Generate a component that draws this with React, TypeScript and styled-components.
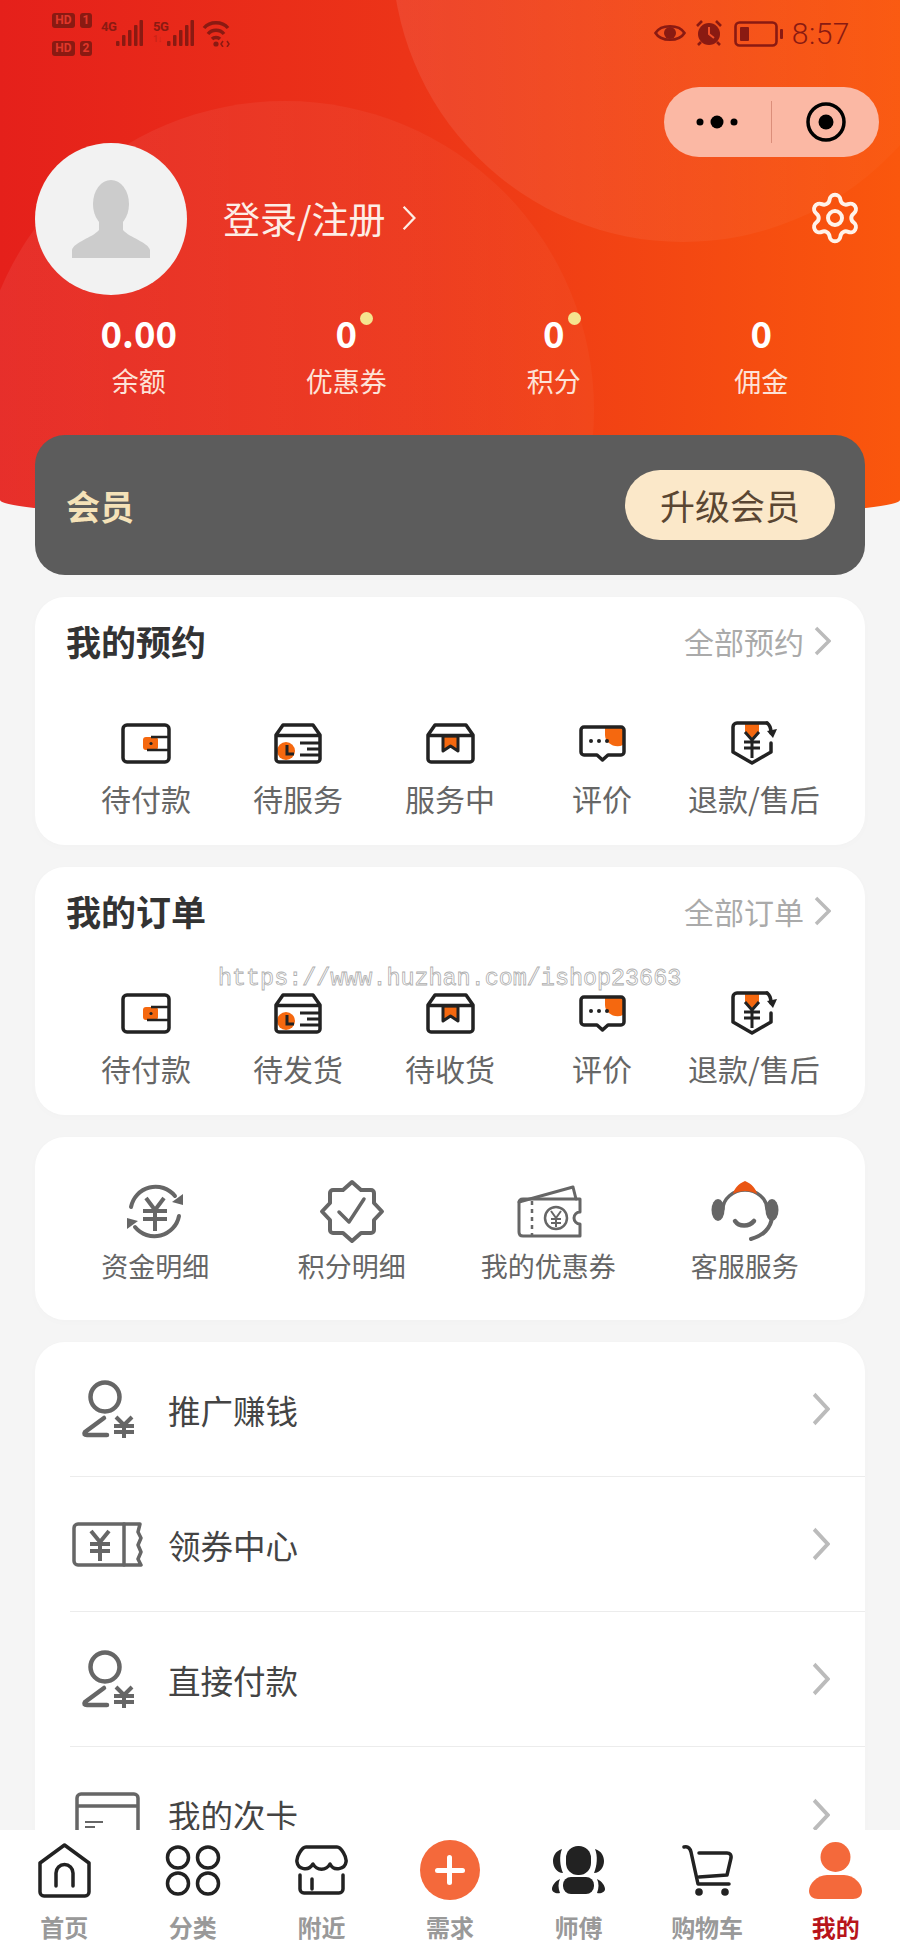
import React from "react";
import styled, { createGlobalStyle } from "styled-components";
import { Settings } from "lucide-react";

const INK = "#222222";
const ORANGE = "#f5680f";
const GREY = "#666666";
const STATUS = "#8a1a12";
const TAB_ORANGE = "#f4693b";

const GlobalStyle = createGlobalStyle`
  html, body {
    margin: 0;
    padding: 0;
    background: #f5f5f5;
  }
  * {
    box-sizing: border-box;
  }
`;

const Page = styled.div`
  position: relative;
  width: 900px;
  height: 1950px;
  overflow: hidden;
  display: flex;
  flex-direction: column;
  background: #f5f5f5;
  font-family: "Noto Sans CJK SC", "Noto Sans", sans-serif;
`;

const Scroll = styled.div`
  flex: 1;
  min-height: 0;
  overflow: hidden;
`;

const Hero = styled.header`
  position: relative;
  height: 521px;
  overflow: hidden;
  background: linear-gradient(90deg, #e5201b 0%, #ec3418 45%, #fa570d 100%);
  border-radius: 0 0 450px 450px / 0 0 21px 21px;
`;

const Bubble = styled.div<{ $x: number; $y: number; $r: number; $from: number; $to: number }>`
  position: absolute;
  left: ${(p) => p.$x - p.$r}px;
  top: ${(p) => p.$y - p.$r}px;
  width: ${(p) => p.$r * 2}px;
  height: ${(p) => p.$r * 2}px;
  border-radius: 50%;
  background: linear-gradient(
    90deg,
    rgba(255, 255, 255, ${(p) => p.$from}),
    rgba(255, 255, 255, ${(p) => p.$to})
  );
`;

const HeroBody = styled.div`
  position: relative;
`;

const StatusBar = styled.div`
  height: 70px;
  padding: 13px 50px 0 52px;
  display: flex;
  justify-content: space-between;
  align-items: flex-start;
  color: ${STATUS};
`;

const StatusGroup = styled.div`
  display: flex;
  align-items: flex-start;
`;

const SimColumn = styled.div`
  display: flex;
  flex-direction: column;
  gap: 13px;
  margin-right: 9px;
`;

const SimRow = styled.div`
  display: flex;
  gap: 5px;
`;

const SimChip = styled.span<{ $wide?: boolean }>`
  width: ${(p) => (p.$wide ? 23 : 12)}px;
  height: 15px;
  border-radius: 3px;
  background: ${STATUS};
  color: #e2372a;
  font: 700 12px/15px "Roboto", sans-serif;
  text-align: center;
`;

const NetStack = styled.div<{ $gap?: number; $width: number }>`
  display: flex;
  flex-direction: column;
  margin: 7px 0 0 ${(p) => p.$gap ?? 0}px;
  width: ${(p) => p.$width}px;
  font: 700 13px/13px "Roboto", sans-serif;
  letter-spacing: -0.5px;
`;

const NetFaint = styled.span`
  margin-top: 1px;
  font-size: 9px;
  line-height: 10px;
  opacity: 0.3;
`;

const BarsSlot = styled.div`
  margin-top: 7px;
`;

const Clock = styled.span`
  margin-left: 9px;
  margin-top: 4px;
  font: 300 30px/34px "Roboto", sans-serif;
  letter-spacing: 0.5px;
`;

const StatusIcon = styled.svg<{ $left?: number; $top?: number }>`
  display: block;
  margin-left: ${(p) => p.$left ?? 0}px;
  margin-top: ${(p) => p.$top ?? 0}px;
`;

const Capsule = styled.div`
  position: absolute;
  top: 87px;
  right: 21px;
  width: 215px;
  height: 70px;
  border-radius: 35px;
  background: #fbb8a4;
  display: flex;
  align-items: center;
`;

const CapsuleSide = styled.div`
  flex: 1;
  height: 100%;
  display: flex;
  align-items: center;
  justify-content: center;
`;

const CapsuleDivider = styled.div`
  width: 1px;
  height: 42px;
  background: rgba(180, 90, 70, 0.45);
`;

const Profile = styled.div`
  padding: 73px 37px 0 35px;
  display: flex;
  align-items: center;
`;

const Avatar = styled.div`
  width: 152px;
  height: 152px;
  border-radius: 50%;
  background: #f2f2f2;
  display: flex;
  align-items: center;
  justify-content: center;
`;

const LoginLink = styled.div`
  margin-left: 36px;
  margin-top: -2px;
  display: flex;
  align-items: center;
  gap: 16px;
  color: #fdeee6;
  font-size: 37px;
  line-height: 50px;
`;

const GearSlot = styled.div`
  margin-left: auto;
  margin-top: -3px;
  display: flex;
  color: #fff3ea;
`;

const Stats = styled.div`
  margin-top: 18px;
  padding: 0 35px;
  display: grid;
  grid-template-columns: repeat(4, 1fr);
`;

const Stat = styled.div`
  display: flex;
  flex-direction: column;
  align-items: center;
`;

const StatValue = styled.span`
  position: relative;
  color: #fff;
  font-size: 36.500px;
  line-height: 40px;
  font-weight: 700;
`;

const StatDot = styled.i`
  position: absolute;
  top: -1px;
  right: -16px;
  width: 13px;
  height: 13px;
  border-radius: 50%;
  background: #f5e58f;
`;

const StatLabel = styled.span`
  margin-top: 10px;
  color: #fde3d8;
  font-size: 27px;
  line-height: 36px;
`;

const Content = styled.main`
  position: relative;
  margin-top: -86px;
  padding: 0 35px;
  display: flex;
  flex-direction: column;
  gap: 22px;
`;

const MemberCard = styled.section`
  height: 140px;
  padding: 0 30px 0 31px;
  border-radius: 30px;
  background: #5c5c5c;
  display: flex;
  align-items: center;
  justify-content: space-between;
`;

const MemberTitle = styled.span`
  color: #f5e2b8;
  font-size: 34px;
  font-weight: 700;
`;

const UpgradeButton = styled.span`
  width: 210px;
  height: 70px;
  border-radius: 35px;
  background: #fbe8c9;
  color: #5a4632;
  font-size: 35px;
  line-height: 70px;
  text-align: center;
`;

const Card = styled.section`
  background: #fff;
  border-radius: 30px;
  box-shadow: 0 2px 10px rgba(0, 0, 0, 0.015);
`;

const OrderCard = styled(Card)`
  height: 248px;
`;

const CardHeader = styled.div`
  height: 92px;
  padding: 0 34px 5px 31px;
  display: flex;
  align-items: center;
  justify-content: space-between;
`;

const CardTitle = styled.h2`
  margin: 0;
  color: #333;
  font-size: 35px;
  font-weight: 700;
`;

const CardMore = styled.span`
  display: flex;
  align-items: center;
  gap: 10px;
  color: #aaa;
  font-size: 30px;
`;

const OrderGrid = styled.div`
  margin-top: 32px;
  padding: 0 35px;
  display: grid;
  grid-template-columns: repeat(5, 1fr);
`;

const GridCell = styled.div`
  display: flex;
  flex-direction: column;
  align-items: center;
`;

const OrderIconBox = styled.div`
  height: 44px;
  display: flex;
  align-items: center;
  justify-content: center;
`;

const OrderLabel = styled.span`
  margin-top: 13px;
  color: ${GREY};
  font-size: 30px;
  line-height: 40px;
  white-space: nowrap;
`;

const ToolCard = styled(Card)`
  height: 183px;
  padding: 41px 22px 0;
  display: grid;
  grid-template-columns: repeat(4, 1fr);
  align-items: start;
`;

const ToolIconBox = styled.div`
  height: 66px;
  display: flex;
  align-items: center;
  justify-content: center;
`;

const ToolLabel = styled.span`
  margin-top: 3px;
  color: ${GREY};
  font-size: 27px;
  line-height: 38px;
  white-space: nowrap;
`;

const ListCard = styled(Card)`
  padding-left: 35px;
  padding-bottom: 40px;
`;

const ListRow = styled.div<{ $last?: boolean }>`
  height: 135px;
  display: flex;
  align-items: center;
  padding-right: 35px;
  border-bottom: ${(p) => (p.$last ? "none" : "1px solid #ececec")};
`;

const ListIconBox = styled.div`
  width: 98px;
  display: flex;
  justify-content: center;
  padding-right: 24px;
`;

const ListText = styled.span`
  flex: 1;
  color: #444;
  font-size: 32.500px;
`;

const TabBar = styled.nav`
  flex: none;
  height: 120px;
  padding-top: 10px;
  background: #fff;
  display: grid;
  grid-template-columns: repeat(7, 1fr);
`;

const Tab = styled.div`
  display: flex;
  flex-direction: column;
  align-items: center;
`;

const TabIconBox = styled.div`
  height: 60px;
  display: flex;
  align-items: center;
  justify-content: center;
`;

const TabLabel = styled.span<{ $active?: boolean }>`
  margin-top: 12px;
  color: ${(p) => (p.$active ? "#b8151b" : "#999")};
  font-size: 24px;
  line-height: 30px;
  font-weight: 700;
`;

const PlusButton = styled.div`
  position: relative;
  width: 60px;
  height: 60px;
  border-radius: 50%;
  background: ${TAB_ORANGE};

  &::before,
  &::after {
    content: "";
    position: absolute;
    background: #fff;
    border-radius: 3px;
  }
  &::before {
    left: 15px;
    right: 15px;
    top: 27.5px;
    height: 5px;
  }
  &::after {
    top: 15px;
    bottom: 15px;
    left: 27.5px;
    width: 5px;
  }
`;

const Watermark = styled.div`
  position: absolute;
  left: 218px;
  top: 964px;
  color: #fff;
  font: 400 23.4px/30px "Liberation Mono", monospace;
  -webkit-text-stroke: 0.8px #aeaeae;
  white-space: nowrap;
`;

const Chevron = ({ w = 17, h = 30, color = "#bbb", sw = 3 }: { w?: number; h?: number; color?: string; sw?: number }) => (
  <svg width={w} height={h} viewBox="0 0 17 30" fill="none" preserveAspectRatio="none">
    <path d="M2 2 L15 15 L2 28" stroke={color} strokeWidth={sw} />
  </svg>
);

const BarsIcon = () => (
  <svg width="27" height="26" viewBox="0 0 27 26" fill="currentColor">
    <rect x="0" y="21" width="3.500" height="5" rx="1" />
    <rect x="6" y="15" width="3.500" height="11" rx="1" />
    <rect x="12" y="10" width="3.500" height="16" rx="1" />
    <rect x="18" y="5" width="3.500" height="21" rx="1" />
    <rect x="23.500" y="0" width="3.500" height="26" rx="1" />
  </svg>
);

const lineProps = { fill: "none", stroke: INK, strokeWidth: 3.5, strokeLinejoin: "round" as const, strokeLinecap: "round" as const };
const greyProps = { ...lineProps, stroke: GREY };

const WalletIcon = () => (
  <svg width="50" height="41" viewBox="0 0 50 41">
    <rect x="2" y="2" width="46" height="37" rx="4" {...lineProps} fill="#fff" />
    <rect x="22" y="14" width="15" height="13" rx="3" fill={ORANGE} />
    <path d="M30 14 H47 M26 27 H47" stroke={INK} strokeWidth="2.5" />
    <circle cx="30" cy="20.5" r="1.6" fill={INK} />
  </svg>
);

const BoxClockIcon = () => (
  <svg width="48" height="41" viewBox="0 0 48 41">
    <circle cx="12" cy="28" r="9" fill={ORANGE} />
    <path d="M9 2 H39 L46 12 V36 a3 3 0 0 1 -3 3 H5 a3 3 0 0 1 -3 -3 V12 Z M2 12.5 H46" {...lineProps} />
    <path d="M13 22 V31 H20" stroke={INK} strokeWidth="3" fill="none" />
    <path d="M26 20 H46 M33 26 H46 M26 32 H46" stroke={INK} strokeWidth="3" fill="none" />
  </svg>
);

const BoxRibbonIcon = () => (
  <svg width="49" height="41" viewBox="0 0 49 41">
    <path d="M17 13 V28 L24.5 23 L32 28 V13 Z" fill={ORANGE} stroke={INK} strokeWidth="3" strokeLinejoin="round" />
    <path d="M9 2 H40 L47 12 V36 a3 3 0 0 1 -3 3 H5 a3 3 0 0 1 -3 -3 V12 Z M2 12.5 H47" {...lineProps} />
  </svg>
);

const ChatIcon = () => (
  <svg width="47" height="37" viewBox="0 0 47 37">
    <path d="M26 2 H44 V20 C36 24 26 18 26 10 Z" fill={ORANGE} />
    <path d="M5 2 H42 a3 3 0 0 1 3 3 V27 a3 3 0 0 1 -3 3 H29 L23.5 35 L18 30 H5 a3 3 0 0 1 -3 -3 V5 a3 3 0 0 1 3 -3 Z" {...lineProps} />
    <circle cx="12" cy="16" r="2" fill={INK} />
    <circle cx="20" cy="16" r="2" fill={INK} />
    <circle cx="28" cy="16" r="2" fill={INK} />
  </svg>
);

const RefundIcon = () => (
  <svg width="47" height="44" viewBox="0 0 47 44">
    <path d="M14 2 H28 V10 C28 14 24 17 21 17 C18 17 14 14 14 10 Z" fill={ORANGE} />
    <path d="M36 2 H6 a4 4 0 0 0 -4 4 V31 L21 42 L40 31 V22" {...lineProps} />
    <path d="M36 2 C39 4 40 7 40 12" {...lineProps} />
    <path d="M36 10 L46 8 L42 17 Z" fill={INK} />
    <path d="M14 11 L21 19 L28 11 M13 21 H29 M13 27 H29 M21 19 V37" stroke={INK} strokeWidth="3" fill="none" />
  </svg>
);

const CoinIcon = () => (
  <svg width="60" height="57" viewBox="0 0 60 57">
    <path d="M6 24 A25 25 0 0 1 50 13" {...greyProps} strokeWidth="4" />
    <path d="M54 33 A25 25 0 0 1 10 44" {...greyProps} strokeWidth="4" />
    <path d="M47 19 L58 22 L58 11 Z M13 38 L2 35 L2 46 Z" fill={GREY} />
    <path d="M21 15 L30 27 L39 15 M18 28 H42 M18 36 H42 M30 27 V48" {...greyProps} strokeWidth="4" strokeLinecap="butt" />
  </svg>
);

const BadgeIcon = () => (
  <svg width="66" height="65" viewBox="0 0 66 65">
    <path
      d="M33 3 L42 11 H52 a3 3 0 0 1 3 3 V24 L63 32.5 L55 41 V51 a3 3 0 0 1 -3 3 H42 L33 62 L24 54 H14 a3 3 0 0 1 -3 -3 V41 L3 32.5 L11 24 V14 a3 3 0 0 1 3 -3 H24 Z"
      {...greyProps}
      strokeWidth="4"
    />
    <path d="M20 33 L30 43 L45 20" {...greyProps} strokeWidth="3.5" />
  </svg>
);

const CouponIcon = () => (
  <svg width="68" height="53" viewBox="0 0 68 53">
    <path d="M5 17 L59 2 L62 14" {...greyProps} strokeWidth="3" />
    <path d="M9 14 H66 V27 a6 6 0 0 0 0 12 V51 H9 C6 51 5 49 5 47 V18 C5 16 6 14 9 14 Z" {...greyProps} strokeWidth="3" />
    <path d="M18 16 V50" {...greyProps} strokeWidth="2.5" strokeDasharray="4 4" strokeLinecap="butt" />
    <circle cx="42" cy="33" r="11" {...greyProps} strokeWidth="2.5" />
    <path d="M37 26 L42 33 L47 26 M37 34 H47 M37 38 H47 M42 33 V42" {...greyProps} strokeWidth="2" strokeLinecap="butt" />
  </svg>
);

const HeadsetIcon = () => (
  <svg width="68" height="60" viewBox="0 0 68 60">
    <path d="M12 28 C12 18 22 9 34 9 C46 9 56 18 56 28" {...greyProps} strokeWidth="3.500" />
    <path d="M34 0 C27 3 23 8 22 13 C29 9 39 9 46 13 C45 8 41 3 34 0 Z" fill="#ea5614" />
    <ellipse cx="7" cy="29" rx="6.500" ry="11" fill={GREY} />
    <ellipse cx="61" cy="29" rx="6.500" ry="11" fill={GREY} />
    <path d="M61 36 C60 47 52 55 40 58" {...greyProps} strokeWidth="4" />
    <path d="M24 40 C28 46 38 46 43 40" {...greyProps} strokeWidth="4.500" />
  </svg>
);

const PersonCoinIcon = () => (
  <svg width="53" height="58" viewBox="0 0 53 58">
    <circle cx="24" cy="17" r="14.5" {...greyProps} strokeWidth="4.5" />
    <path d="M23 38 L4 52 Q2 55 6 55 H26" {...greyProps} strokeWidth="4.5" />
    <path d="M35 37 L43 45 L51 37 M33 46 H53 M33 52 H53 M43 45 V58" {...greyProps} strokeWidth="4" strokeLinecap="butt" />
  </svg>
);

const TicketIcon = () => (
  <svg width="71" height="45" viewBox="0 0 71 45">
    <path d="M6 2 H68 L66 10 L69 16 L66 23 L69 30 L66 37 L69 43 H6 a4 4 0 0 1 -4 -4 V6 a4 4 0 0 1 4 -4 Z" {...greyProps} strokeWidth="3.5" />
    <path d="M52 2 V43" {...greyProps} strokeWidth="3.5" />
    <path d="M19 9 L28 20 L37 9 M18 22 H38 M18 29 H38 M28 20 V39" {...greyProps} strokeWidth="4" strokeLinecap="butt" />
  </svg>
);

const CountCardIcon = () => (
  <svg width="65" height="46" viewBox="0 0 65 46">
    <path d="M2 46 V6 a4 4 0 0 1 4 -4 H59 a4 4 0 0 1 4 4 V46 M2 14 H63" {...greyProps} strokeWidth="3.5" />
    <path d="M10 30 H28 M10 35 H20" stroke={GREY} strokeWidth="2" />
  </svg>
);

const HomeIcon = () => (
  <svg width="55" height="56" viewBox="0 0 55 56">
    <path d="M27.5 3 L52 21 V50 a4 4 0 0 1 -4 4 H7 a4 4 0 0 1 -4 -4 V21 Z" {...lineProps} />
    <path d="M19 44 V31 a8.5 8.5 0 0 1 17 0 V44" {...lineProps} />
  </svg>
);

const GridIcon = () => (
  <svg width="56" height="51" viewBox="0 0 56 51">
    <circle cx="13" cy="12.5" r="10.5" {...lineProps} />
    <circle cx="43" cy="12.5" r="10.5" {...lineProps} />
    <circle cx="13" cy="38.5" r="10.5" {...lineProps} />
    <circle cx="43" cy="38.5" r="10.5" {...lineProps} />
  </svg>
);

const ShopIcon = () => (
  <svg width="53" height="50" viewBox="0 0 53 50">
    <path d="M11 2 H42 C46 2 52 12 51 17 C50 24 39 27 35 19 C31 26 22 26 18 19 C13 27 3 24 2 17 C1 12 7 2 11 2 Z" {...lineProps} />
    <path d="M5 30 V44 a4 4 0 0 0 4 4 H44 a4 4 0 0 0 4 -4 V30 M17 34 V44" {...lineProps} />
  </svg>
);

const PeopleIcon = () => (
  <svg width="53" height="48" viewBox="0 0 53 48" fill={INK}>
    <rect x="14" y="0" width="25" height="29" rx="12" />
    <path d="M10 3 C3 5 1 11 1 15 C1 21 5 27 11 27 C8 20 7 10 10 3 Z" />
    <path d="M43 3 C50 5 52 11 52 15 C52 21 48 27 42 27 C45 20 46 10 43 3 Z" />
    <rect x="11" y="31" width="31" height="17" rx="8" />
    <path d="M8 33 C3 35 0 40 0 43 C0 46 4 48 8 47 C6 42 6 37 8 33 Z" />
    <path d="M45 33 C50 35 53 40 53 43 C53 46 49 48 45 47 C47 42 47 37 45 33 Z" />
  </svg>
);

const CartIcon = () => (
  <svg width="51" height="53" viewBox="0 0 51 53">
    <path d="M2 3 C6 2 8 4 9 8 L16 40 H47" {...lineProps} />
    <path d="M17 33 L45 31 L49 14 C49.500 11 48 9 45 9 H17" {...lineProps} />
    <circle cx="17" cy="48" r="3.8" fill={INK} />
    <circle cx="43" cy="48" r="3.8" fill={INK} />
  </svg>
);

const MeIcon = () => (
  <svg width="53" height="57" viewBox="0 0 53 57" fill={TAB_ORANGE}>
    <circle cx="26.500" cy="15" r="15" />
    <path d="M18 33 H35 C45 33 53 42 53 49 C53 54 49 57 44 57 H9 C4 57 0 54 0 49 C0 42 8 33 18 33 Z" />
  </svg>
);

const bookingItems = [
  { label: "待付款", icon: <WalletIcon /> },
  { label: "待服务", icon: <BoxClockIcon /> },
  { label: "服务中", icon: <BoxRibbonIcon /> },
  { label: "评价", icon: <ChatIcon /> },
  { label: "退款/售后", icon: <RefundIcon /> },
];

const orderItems = [
  { label: "待付款", icon: <WalletIcon /> },
  { label: "待发货", icon: <BoxClockIcon /> },
  { label: "待收货", icon: <BoxRibbonIcon /> },
  { label: "评价", icon: <ChatIcon /> },
  { label: "退款/售后", icon: <RefundIcon /> },
];

const tools = [
  { label: "资金明细", icon: <CoinIcon /> },
  { label: "积分明细", icon: <BadgeIcon /> },
  { label: "我的优惠券", icon: <CouponIcon /> },
  { label: "客服服务", icon: <HeadsetIcon /> },
];

const listItems = [
  { label: "推广赚钱", icon: <PersonCoinIcon /> },
  { label: "领券中心", icon: <TicketIcon /> },
  { label: "直接付款", icon: <PersonCoinIcon /> },
  { label: "我的次卡", icon: <CountCardIcon /> },
];

const stats = [
  { value: "0.00", label: "余额", dot: false },
  { value: "0", label: "优惠券", dot: true },
  { value: "0", label: "积分", dot: true },
  { value: "0", label: "佣金", dot: false },
];

const tabs = [
  { label: "首页", icon: <HomeIcon /> },
  { label: "分类", icon: <GridIcon /> },
  { label: "附近", icon: <ShopIcon /> },
  { label: "需求", icon: <PlusButton /> },
  { label: "师傅", icon: <PeopleIcon /> },
  { label: "购物车", icon: <CartIcon /> },
  { label: "我的", icon: <MeIcon />, active: true },
];

const OrderSection = ({ title, more, items }: { title: string; more: string; items: { label: string; icon: React.ReactNode }[] }) => (
  <OrderCard>
    <CardHeader>
      <CardTitle>{title}</CardTitle>
      <CardMore>
        {more}
        <Chevron sw={3.5} />
      </CardMore>
    </CardHeader>
    <OrderGrid>
      {items.map((item) => (
        <GridCell key={item.label}>
          <OrderIconBox>{item.icon}</OrderIconBox>
          <OrderLabel>{item.label}</OrderLabel>
        </GridCell>
      ))}
    </OrderGrid>
  </OrderCard>
);

export default function App() {
  return (
    <Page>
      <GlobalStyle />
      <Scroll>
        <Hero>
          <Bubble $x={683} $y={-49} $r={291} $from={0.09} $to={0.01} />
          <Bubble $x={285} $y={410} $r={309} $from={0.07} $to={0.03} />
          <HeroBody>
            <StatusBar>
              <StatusGroup>
                <SimColumn>
                  <SimRow>
                    <SimChip $wide>HD</SimChip>
                    <SimChip>1</SimChip>
                  </SimRow>
                  <SimRow>
                    <SimChip $wide>HD</SimChip>
                    <SimChip>2</SimChip>
                  </SimRow>
                </SimColumn>
                <NetStack $width={15}>4G</NetStack>
                <BarsSlot>
                  <BarsIcon />
                </BarsSlot>
                <NetStack $gap={10} $width={14}>
                  5G
                  <NetFaint>1↓</NetFaint>
                </NetStack>
                <BarsSlot>
                  <BarsIcon />
                </BarsSlot>
                <StatusIcon $left={8} $top={7} width="30" height="27" viewBox="0 0 30 27" fill="none" stroke="currentColor" strokeWidth="3.4">
                  <path d="M2 8 C8 1 20 1 26 8" />
                  <path d="M6 14 C10 9 18 9 22 14" />
                  <path d="M10 19 C12 17 16 17 18 19" />
                  <circle cx="14" cy="24" r="2.6" fill="currentColor" stroke="none" />
                  <path d="M21 21 L19 24 L21 27 M25 21 L27 24 L25 27" strokeWidth="1.500" />
                </StatusIcon>
              </StatusGroup>
              <StatusGroup>
                <StatusIcon $top={9} width="32" height="22" viewBox="0 0 32 22" fill="none" stroke="currentColor" strokeWidth="2.6">
                  <path d="M1.500 11 C7 2 25 2 30.500 11 C25 20 7 20 1.500 11 Z" />
                  <circle cx="16" cy="11" r="6" fill="currentColor" stroke="none" />
                </StatusIcon>
                <StatusIcon $left={9} $top={7} width="28" height="26" viewBox="0 0 28 26" fill="currentColor">
                  <circle cx="14" cy="14" r="11" />
                  <path d="M2 6 L7 1 M26 6 L21 1 M6 22 L3 25 M22 22 L25 25" stroke="currentColor" strokeWidth="2.6" fill="none" />
                  <path d="M14 7 V14 L19 18" stroke="#f0502a" strokeWidth="2" fill="none" />
                </StatusIcon>
                <StatusIcon $left={11} $top={8} width="49" height="26" viewBox="0 0 49 26" fill="none" stroke="currentColor" strokeWidth="2.6">
                  <rect x="1.500" y="1.500" width="41" height="23" rx="4" />
                  <rect x="6" y="6" width="9" height="14" rx="1" fill="currentColor" stroke="none" />
                  <rect x="46" y="8" width="3" height="10" rx="1" fill="currentColor" stroke="none" />
                </StatusIcon>
                <Clock>8:57</Clock>
              </StatusGroup>
            </StatusBar>
            <Capsule>
              <CapsuleSide>
                <svg width="44" height="14" viewBox="0 0 44 14" fill="#000">
                  <circle cx="4" cy="7" r="3.500" />
                  <circle cx="21" cy="7" r="6.500" />
                  <circle cx="38" cy="7" r="3.500" />
                </svg>
              </CapsuleSide>
              <CapsuleDivider />
              <CapsuleSide>
                <svg width="40" height="40" viewBox="0 0 40 40">
                  <circle cx="20" cy="20" r="18" fill="none" stroke="#000" strokeWidth="3.500" />
                  <circle cx="20" cy="20" r="7.500" fill="#000" />
                </svg>
              </CapsuleSide>
            </Capsule>
            <Profile>
              <Avatar>
                <svg width="78" height="78" viewBox="0 0 78 78" fill="#cccccc">
                  <ellipse cx="39" cy="24" rx="18" ry="24" />
                  <path d="M27 42 V50 C20 58 2 62 0 70 V78 H78 V70 C76 62 58 58 51 50 V42 Z" />
                </svg>
              </Avatar>
              <LoginLink>
                登录/注册
                <Chevron w={14} h={26} color="#fdeee6" sw={2.8} />
              </LoginLink>
              <GearSlot>
                <Settings size={56} strokeWidth={1.7} />
              </GearSlot>
            </Profile>
            <Stats>
              {stats.map((stat) => (
                <Stat key={stat.label}>
                  <StatValue>
                    {stat.value}
                    {stat.dot && <StatDot />}
                  </StatValue>
                  <StatLabel>{stat.label}</StatLabel>
                </Stat>
              ))}
            </Stats>
          </HeroBody>
        </Hero>
        <Content>
          <MemberCard>
            <MemberTitle>会员</MemberTitle>
            <UpgradeButton>升级会员</UpgradeButton>
          </MemberCard>
          <OrderSection title="我的预约" more="全部预约" items={bookingItems} />
          <OrderSection title="我的订单" more="全部订单" items={orderItems} />
          <ToolCard>
            {tools.map((tool) => (
              <GridCell key={tool.label}>
                <ToolIconBox>{tool.icon}</ToolIconBox>
                <ToolLabel>{tool.label}</ToolLabel>
              </GridCell>
            ))}
          </ToolCard>
          <ListCard>
            {listItems.map((item, i) => (
              <ListRow key={item.label} $last={i === listItems.length - 1}>
                <ListIconBox>{item.icon}</ListIconBox>
                <ListText>{item.label}</ListText>
                <Chevron w={18} h={34} sw={3.5} />
              </ListRow>
            ))}
          </ListCard>
        </Content>
      </Scroll>
      <TabBar>
        {tabs.map((tab) => (
          <Tab key={tab.label}>
            <TabIconBox>{tab.icon}</TabIconBox>
            <TabLabel $active={tab.active}>{tab.label}</TabLabel>
          </Tab>
        ))}
      </TabBar>
      <Watermark>https://www.huzhan.com/ishop23663</Watermark>
    </Page>
  );
}
